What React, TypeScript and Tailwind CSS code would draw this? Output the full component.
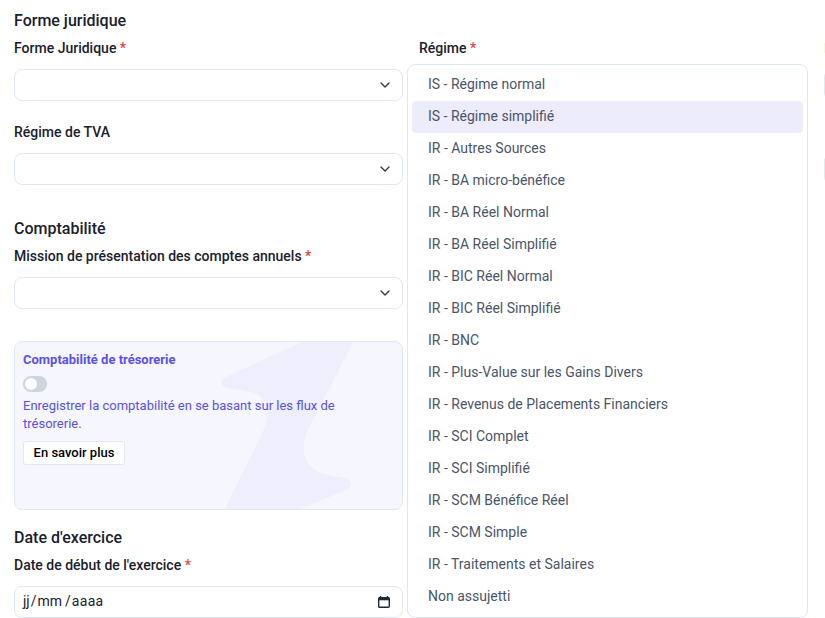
import React from 'react';

const options = [
  'IS - Régime normal',
  'IS - Régime simplifié',
  'IR - Autres Sources',
  'IR - BA micro-bénéfice',
  'IR - BA Réel Normal',
  'IR - BA Réel Simplifié',
  'IR - BIC Réel Normal',
  'IR - BIC Réel Simplifié',
  'IR - BNC',
  'IR - Plus-Value sur les Gains Divers',
  'IR - Revenus de Placements Financiers',
  'IR - SCI Complet',
  'IR - SCI Simplifié',
  'IR - SCM Bénéfice Réel',
  'IR - SCM Simple',
  'IR - Traitements et Salaires',
  'Non assujetti',
];

const Label = ({ text, required }: { text: string; required?: boolean }) => (
  <div className="h-[21px] text-sm leading-[21px] font-medium text-[#1a202c]">
    {text}
    {required && <span className="text-[#e53e3e]"> *</span>}
  </div>
);

const Select = () => (
  <div className="mt-[10px] flex h-8 items-center justify-end rounded-lg border border-[#e2e8f0] bg-white pr-[11px]">
    <svg width="12" height="12" viewBox="0 0 24 24" fill="none" stroke="#2d3748" strokeWidth="2.6" strokeLinecap="round" strokeLinejoin="round">
      <path d="M4 8l8 8 8-8" />
    </svg>
  </div>
);

export default function App() {
  return (
    <div className="relative h-[618px] w-[825px] overflow-hidden bg-white font-['Roboto',sans-serif]">
      <div className="flex gap-4 pl-[14px] pt-[10px]">
        <div className="w-[389px] shrink-0">
          <h2 className="h-[21px] text-base leading-[21px] font-medium text-[#1a202c]">Forme juridique</h2>
          <div className="mt-[7px]">
            <Label text="Forme Juridique" required />
            <Select />
          </div>
          <div className="mt-[21px]">
            <Label text="Régime de TVA" />
            <Select />
          </div>
          <h2 className="mt-[33px] h-[21px] text-base leading-[21px] font-medium text-[#1a202c]">Comptabilité</h2>
          <div className="mt-[7px]">
            <Label text="Mission de présentation des comptes annuels" required />
            <Select />
          </div>
          <div className="relative mt-8 h-[169px] overflow-hidden rounded-lg border border-[#e2e8f0] bg-[#f6f6fe] px-2 pt-[7px]">
            <svg className="absolute top-0 left-0" width="387" height="167" viewBox="0 0 387 167">
              <path
                d="M287 0 L338 0 L292 90 C284 110 290 128 312 133 L330 136 C337 138 337 145 331 148 L285 167 L210 167 L250 85 C256 68 252 52 232 49 L212 46 C205 44 205 38 211 35 Z"
                fill="#eeeefc"
              />
            </svg>
            <div className="relative">
              <div className="h-[21px] text-[13px] leading-[21px] font-bold text-[#5a51e0]">Comptabilité de trésorerie</div>
              <div className="mt-[6px] flex h-4 w-6 items-center rounded-full bg-[#cbd5e0] p-[2px]">
                <div className="h-3 w-3 rounded-full bg-white" />
              </div>
              <p className="mt-[5px] text-[13px] leading-[18px] text-[#5a51e0]">
                Enregistrer la comptabilité en se basant sur les flux de trésorerie.
              </p>
              <button className="mt-2 block h-6 w-[102px] rounded-[3px] border border-[#e2e8f0] bg-white text-[13px] font-medium text-black">
                En savoir plus
              </button>
            </div>
          </div>
          <h2 className="mt-[17px] h-[21px] text-base leading-[21px] font-medium text-[#1a202c]">Date d'exercice</h2>
          <div className="mt-[7px]">
            <Label text="Date de début de l'exercice" required />
            <div className="mt-[10px] flex h-8 items-center justify-between rounded-lg border border-[#e2e8f0] bg-white pr-[11px] pl-2">
              <span className="flex gap-[1px] pb-[2px] text-sm text-[#1a202c]">
                <span>jj</span>
                <span>/</span>
                <span>mm</span>
                <span className="ml-[2px]">/</span>
                <span className="tracking-[0.3px]">aaaa</span>
              </span>
              <svg width="14" height="14" viewBox="0 0 14 14" fill="none">
                <path d="M3.5 1v2M10.5 1v2" stroke="#1f2937" strokeWidth="1.4" />
                <rect x="1.7" y="2.7" width="10.6" height="9.6" rx="1" stroke="#1f2937" strokeWidth="1.4" />
                <rect x="1.7" y="2.7" width="10.6" height="2.6" fill="#1f2937" />
              </svg>
            </div>
          </div>
        </div>
        <div className="w-[389px] shrink-0">
          <div className="mt-[28px]">
            <Label text="Régime" required />
          </div>
        </div>
        <div className="w-[389px] shrink-0 pt-[33px]">
          <div className="h-[10px] w-px bg-[#fff9d9]" />
          <div className="mt-[16px] h-8 rounded-lg border border-[#e2e8f0] bg-white" />
          <div className="mt-[52px] h-8 rounded-lg border border-[#e2e8f0] bg-white" />
        </div>
      </div>
      <div className="absolute top-[64px] left-[407px] w-[401px] rounded-lg border border-[#e2e8f0] bg-white p-1">
        {options.map((o, i) => (
          <div
            key={o}
            className={`flex h-8 items-center rounded-[4px] px-4 pb-[2px] text-sm text-[#4a5568] ${i === 1 ? 'bg-[#edecfb]' : ''}`}
          >
            {o}
          </div>
        ))}
      </div>
    </div>
  );
}
